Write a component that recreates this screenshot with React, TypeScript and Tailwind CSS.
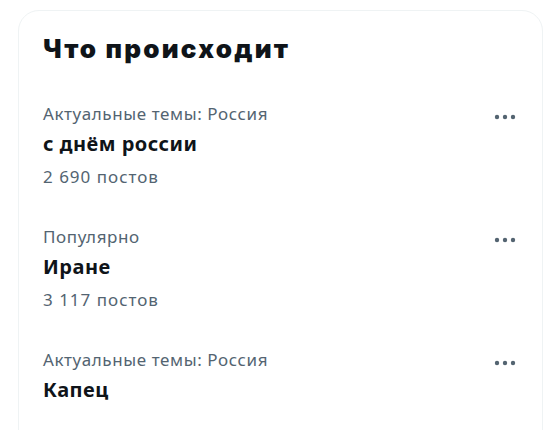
const trends = [
  { context: "Актуальные темы: Россия", name: "с днём россии", posts: "2 690 постов" },
  { context: "Популярно", name: "Иране", posts: "3 117 постов" },
  { context: "Актуальные темы: Россия", name: "Капец", posts: "" },
];

function Dots() {
  return (
    <svg width="22" height="6" viewBox="0 0 22 6" className="mt-[15px] mr-[2px] shrink-0 text-[#536471]">
      <circle cx="3" cy="3" r="2.2" fill="currentColor" />
      <circle cx="11" cy="3" r="2.2" fill="currentColor" />
      <circle cx="19" cy="3" r="2.2" fill="currentColor" />
    </svg>
  );
}

export default function App() {
  return (
    <div className="w-[551px] h-[430px] overflow-hidden bg-white font-['Noto_Sans',sans-serif]">
      <div className="ml-[18px] mt-[10px] w-[525px] pb-10 border border-[#eff3f4] rounded-[21px]">
        {/* header */}
        <h2 className="px-6 pt-[22px] pb-[20px] font-['Inter',sans-serif] text-[26px] leading-[31px] font-black tracking-[2.2px] text-[#0f1419]">
          Что происходит
        </h2>

        {trends.map((t, i) => (
          <div key={i} className="flex justify-between items-start px-6 py-[15px]">
            <div>
              <div className="text-[17px] leading-[30px] tracking-[0.6px] text-[#536471]">{t.context}</div>
              <div className="text-[20px] leading-[30px] font-bold tracking-[0.5px] text-[#0f1419]">{t.name}</div>
              {t.posts && (
                <div className="mt-[3px] text-[17px] leading-[30px] tracking-[1px] text-[#536471]">{t.posts}</div>
              )}
            </div>
            <Dots />
          </div>
        ))}
      </div>
    </div>
  );
}
